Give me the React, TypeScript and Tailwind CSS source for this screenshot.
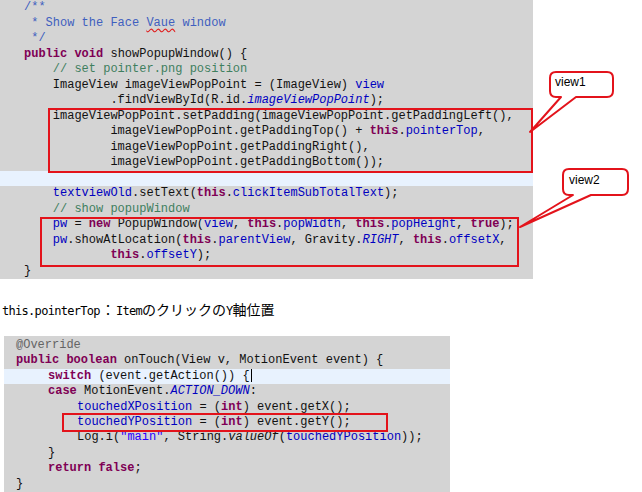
import React from "react";

type Tok = [string, string?];

const K = "font-bold text-[#7f0055]";
const F = "text-[#0000c0]";
const FI = "italic text-[#0000c0]";
const C = "text-[#3f7f5f]";
const JD = "text-[#3f5fbf]";
const S = "text-[#2a00ff]";
const A = "text-[#646464]";
const I = "italic";

const topLines: { toks: Tok[]; hl?: boolean }[] = [
  { toks: [["/**", JD]] },
  { toks: [[" * Show the Face ", JD], ["Vaue", JD + " underline decoration-wavy decoration-[#e02020] underline-offset-2"], [" window", JD]] },
  { toks: [[" */", JD]] },
  { toks: [["public", K], [" "], ["void", K], [" showPopupWindow() {"]] },
  { toks: [["    "], ["// set pointer.png position", C]] },
  { toks: [["    ImageView imageViewPopPoint = (ImageView) "], ["view", F]] },
  { toks: [["            .findViewById(R.id."], ["imageViewPopPoint", FI], [");"]] },
  { toks: [["    imageViewPopPoint.setPadding(imageViewPopPoint.getPaddingLeft(),"]] },
  { toks: [["            imageViewPopPoint.getPaddingTop() + "], ["this", K], ["."], ["pointerTop", F], [","]] },
  { toks: [["            imageViewPopPoint.getPaddingRight(),"]] },
  { toks: [["            imageViewPopPoint.getPaddingBottom());"]] },
  { toks: [[""]], hl: true },
  { toks: [["    "], ["textviewOld", F], [".setText("], ["this", K], ["."], ["clickItemSubTotalText", F], [");"]] },
  { toks: [["    "], ["// show popupWindow", C]] },
  {
    toks: [
      ["    "], ["pw", F], [" = "], ["new", K], [" PopupWindow("], ["view", F], [", "], ["this", K], ["."],
      ["popWidth", F], [", "], ["this", K], ["."], ["popHeight", F], [", "], ["true", K], [");"],
    ],
  },
  {
    toks: [
      ["    "], ["pw", F], [".showAtLocation("], ["this", K], ["."], ["parentView", F], [", Gravity."], ["RIGHT", FI],
      [", "], ["this", K], ["."], ["offsetX", F], [","],
    ],
  },
  { toks: [["            "], ["this", K], ["."], ["offsetY", F], [");"]] },
  { toks: [["}"]] },
];

const bottomLines: { toks: Tok[]; pad: string; hl?: boolean; caret?: boolean }[] = [
  { pad: "pl-[12px]", toks: [["@Override", A]] },
  { pad: "pl-[12px]", toks: [["public", K], [" "], ["boolean", K], [" onTouch(View v, MotionEvent event) {"]] },
  { pad: "pl-[44px]", hl: true, caret: true, toks: [["switch", K], [" (event.getAction()) {"]] },
  { pad: "pl-[44px]", toks: [["case", K], [" MotionEvent."], ["ACTION_DOWN", FI], [":"]] },
  { pad: "pl-[73px]", toks: [["touchedXPosition", F], [" = ("], ["int", K], [") event.getX();"]] },
  { pad: "pl-[73px]", toks: [["touchedYPosition", F], [" = ("], ["int", K], [") event.getY();"]] },
  {
    pad: "pl-[73px]",
    toks: [["Log.i("], ['"main"', S], [", String."], ["valueOf", I], ["("], ["touchedYPosition", F], ["));"]],
  },
  { pad: "pl-[44px]", toks: [["}"]] },
  { pad: "pl-[44px]", toks: [["return", K], [" "], ["false", K], [";"]] },
  { pad: "pl-[12px]", toks: [["}"]] },
];

function Toks({ toks }: { toks: Tok[] }) {
  return (
    <>
      {toks.map((t, i) => (
        <span key={i} className={t[1]}>
          {t[0]}
        </span>
      ))}
    </>
  );
}

export default function App() {
  return (
    <div className="relative w-[642px] h-[492px] bg-white overflow-hidden font-['Liberation_Mono',monospace] text-[12px] text-[#111]">
      {/* editor 1 */}
      <div className="relative w-[533px] bg-[#d4d4d4]">
        {topLines.map((l, i) => (
          <div
            key={i}
            className={`h-[15.5px] leading-[15.5px] whitespace-pre pl-[24px] ${l.hl ? "bg-[#e8f2fe]" : ""}`}
          >
            <Toks toks={l.toks} />
          </div>
        ))}
        <div className="absolute left-[48px] top-[108px] w-[485px] h-[65px] border-2 border-[#e3131b]" />
        <div className="absolute left-[40px] top-[217px] w-[479px] h-[50px] border-2 border-[#e3131b]" />
      </div>

      {/* note */}
      <div className="h-[57px] pt-[22px] pl-[2px] leading-[16px] whitespace-pre text-black">
        <span className="font-['DejaVu_Sans_Mono',monospace] text-[12px] tracking-[-0.7px]">this.pointerTop</span>
        <span className="font-['Noto_Sans_CJK_JP',sans-serif] text-[14px] mx-[1px]">：</span>
        <span className="font-['DejaVu_Sans_Mono',monospace] text-[12px] tracking-[-0.7px]">Item</span>
        <span className="font-['Noto_Sans_CJK_JP',sans-serif] text-[14px]">のクリックの</span>
        <span className="font-['DejaVu_Sans_Mono',monospace] text-[12px] tracking-[-0.7px]">Y</span>
        <span className="font-['Noto_Sans_CJK_JP',sans-serif] text-[14px]">軸位置</span>
      </div>

      {/* editor 2 */}
      <div className="relative ml-[4px] w-[446px] h-[156px] pt-[2px] bg-[#d4d4d4]">
        {bottomLines.map((l, i) => (
          <div
            key={i}
            className={`h-[15.4px] leading-[15.4px] whitespace-pre ${l.pad} ${l.hl ? "bg-[#e8f2fe]" : ""}`}
          >
            <Toks toks={l.toks} />
            {l.caret && <span className="inline-block w-[1px] h-[13px] bg-black align-middle ml-[1px]" />}
          </div>
        ))}
        <div className="absolute left-[58px] top-[77px] w-[326px] h-[19px] border-2 border-[#e3131b]" />
      </div>

      {/* callouts */}
      <svg className="absolute left-0 top-0 pointer-events-none" width="642" height="492">
        <path
          d="M556,72 H607 Q613,72 613,78 V91 Q613,97 607,97 H576 L530,132 L561,97 H556 Q550,97 550,91 V78 Q550,72 556,72 Z"
          fill="white"
          stroke="#e3131b"
          strokeWidth="2"
          strokeLinejoin="round"
        />
        <path
          d="M569,169 H622 Q628,169 628,175 V189 Q628,195 622,195 H591 L520,227 L573,195 H569 Q563,195 563,189 V175 Q563,169 569,169 Z"
          fill="white"
          stroke="#e3131b"
          strokeWidth="2"
          strokeLinejoin="round"
        />
      </svg>
      <div className="absolute left-[555px] top-[75px] font-['Liberation_Sans',sans-serif] text-[12px] leading-[14px] text-black">
        view1
      </div>
      <div className="absolute left-[569px] top-[173px] font-['Liberation_Sans',sans-serif] text-[12px] leading-[14px] text-black">
        view2
      </div>
    </div>
  );
}
